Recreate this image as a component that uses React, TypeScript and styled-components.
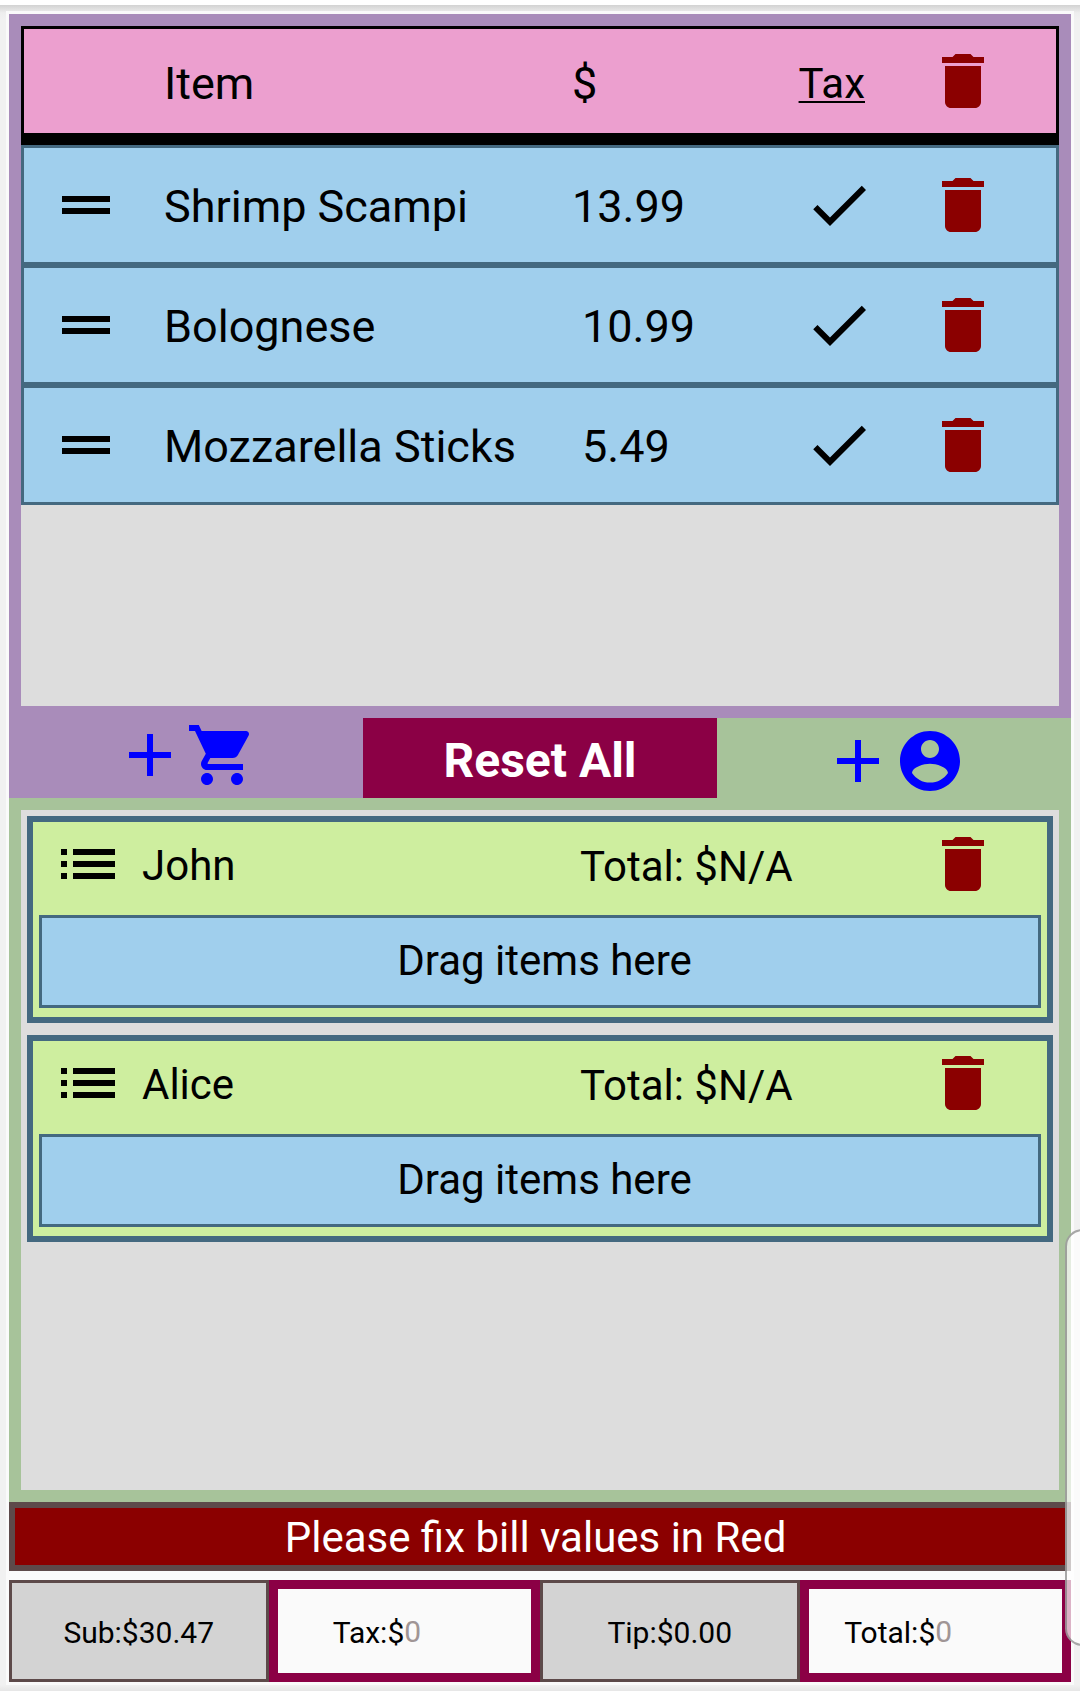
import React, { useState } from "react";
import styled, { createGlobalStyle } from "styled-components";

const color = {
  page: "#f1f1f1",
  frame: "#fafafa",
  purple: "#a98cba",
  sage: "#a7c39a",
  pink: "#ec9fcf",
  sky: "#a0cfed",
  slate: "#446980",
  lime: "#ceee9f",
  tray: "#dddddd",
  maroon: "#8b0045",
  danger: "#8b0000",
  umber: "#5d4a4a",
  link: "#0000ff",
};

const GlobalStyle = createGlobalStyle`
  *, *::before, *::after { box-sizing: border-box; }
  body {
    margin: 0;
    background: ${color.page};
    color: #000;
    font-family: Roboto, "Liberation Sans", sans-serif;
  }
  button, input { font: inherit; color: inherit; }
`;

const Screen = styled.div`
  position: relative;
  display: flex;
  flex-direction: column;
  min-height: 100vh;
  padding: 6px;
  border-top: 5px solid #fff;
  background: linear-gradient(#d2d2d2, #eeeeee 8px, ${color.page} 14px, ${color.page} calc(100% - 6px), #e6e6e6);
  overflow: hidden;
`;

const Frame = styled.main`
  flex: 1;
  display: flex;
  flex-direction: column;
  border: 3px solid ${color.frame};
  background: ${color.frame};
`;

const Panel = styled.section<{ $tone: string }>`
  flex: 1 0 0;
  display: flex;
  flex-direction: column;
  padding: 12px;
  background: ${(p) => p.$tone};
`;

const Tray = styled.div<{ $inset?: boolean }>`
  flex: 1;
  display: flex;
  flex-direction: column;
  gap: 12px;
  padding: ${(p) => (p.$inset ? "6px" : "0")};
  background: ${color.tray};
`;

const ItemTable = styled.table`
  display: block;
  font-size: 45px;
  line-height: 54px;

  thead,
  tbody {
    display: block;
  }
`;

const ItemRow = styled.tr<{ $header?: boolean }>`
  display: grid;
  grid-template-columns: 72px 450fr 231fr 72px 124px;
  align-items: center;
  min-height: ${(p) => (p.$header ? "119px" : "120px")};
  padding: 0 57px 0 26px;
  border: 3px solid ${(p) => (p.$header ? "#000" : color.slate)};
  border-bottom-width: ${(p) => (p.$header ? "12px" : "3px")};
  background: ${(p) => (p.$header ? color.pink : color.sky)};

  th,
  td {
    display: flex;
    align-items: center;
    padding: 0;
    font-weight: 400;
    white-space: nowrap;
  }

  th:nth-child(2),
  th:nth-child(3) {
    padding-top: 6px;
  }

  td:nth-child(2),
  td:nth-child(3) {
    padding-top: 4px;
  }

  th:nth-child(2),
  td:nth-child(2) {
    padding-left: 42px;
  }

  th:last-child,
  td:last-child {
    justify-content: flex-end;
  }
`;

const PriceCell = styled.td<{ $indent: boolean }>`
  && {
    padding-left: ${(p) => (p.$indent ? "10px" : "0")};
  }
`;

const TaxHeading = styled.th`
  && {
    justify-content: flex-end;
    padding: 6px 10px 0 0;
    font-size: 42px;
    text-decoration: underline 2px;
    text-underline-offset: 3px;
    text-decoration-skip-ink: none;
  }
`;

const IconButton = styled.button<{ $color?: string }>`
  display: flex;
  padding: 0;
  border: 0;
  background: none;
  color: ${(p) => p.$color ?? "#000"};
  cursor: pointer;
`;

const Glyph = styled.svg`
  display: block;
  width: 72px;
  height: 72px;
  fill: currentColor;
`;

const TaxToggle = styled.label`
  display: grid;
  cursor: pointer;

  > * {
    grid-area: 1 / 1;
  }

  input {
    width: 72px;
    height: 72px;
    margin: 0;
    appearance: none;
    cursor: pointer;
  }

  svg {
    visibility: hidden;
    pointer-events: none;
  }

  input:checked + svg {
    visibility: visible;
  }
`;

const ActionBar = styled.div`
  display: grid;
  grid-template-columns: repeat(3, 1fr);
  min-height: 80px;
`;

const AddButton = styled.button<{ $tone: string; $drop?: boolean }>`
  display: flex;
  align-items: center;
  justify-content: center;
  padding: ${(p) => (p.$drop ? "6px 0 0" : "0 0 6px")};
  border: 0;
  background: ${(p) => p.$tone};
  color: ${color.link};
  cursor: pointer;
`;

const ResetButton = styled.button`
  padding: 6px 0 0;
  border: 0;
  background: ${color.maroon};
  color: #fff;
  font-size: 48px;
  line-height: 60px;
  font-weight: 700;
  cursor: pointer;
`;

const PersonCard = styled.article`
  padding: 6px 6px 9px;
  border: 6px solid ${color.slate};
  background: ${color.lime};
  font-size: 42px;
  line-height: 54px;
`;

const PersonHeader = styled.header`
  display: grid;
  grid-template-columns: 72px 456fr 347fr 72px;
  align-items: center;
  padding: 0 42px 15px 13px;
`;

const PersonName = styled.h2`
  margin: 0;
  padding: 4px 0 0 18px;
  font-size: inherit;
  font-weight: 400;
`;

const PersonTotal = styled.span`
  padding-top: 6px;
`;

const DropZone = styled.div`
  display: flex;
  align-items: center;
  justify-content: center;
  min-height: 93px;
  padding: 0 0 2px 9px;
  border: 3px solid ${color.slate};
  background: ${color.sky};
`;

const Banner = styled.p`
  margin: 0 0 9px;
  padding: 3px 9px 0 0;
  border: 6px solid ${color.umber};
  background: ${color.danger};
  color: #fff;
  font-size: 42px;
  line-height: 54px;
  text-align: center;
`;

const BillBar = styled.footer`
  display: flex;
  min-height: 102px;
  font-size: 30px;
  line-height: 36px;
`;

const BillCell = styled.div`
  flex: 1;
  box-sizing: content-box;
  display: flex;
  align-items: center;
  justify-content: center;
  border: 3px solid ${color.umber};
  background: #d3d3d3;

  span {
    padding-top: 4px;
  }
`;

const BillField = styled.label`
  flex: 1;
  box-sizing: content-box;
  display: grid;
  grid-template-columns: 1fr 1fr;
  align-items: center;
  border: 9px solid ${color.maroon};
  background: ${color.frame};

  span {
    padding-top: 4px;
    text-align: right;
  }

  input {
    width: 100%;
    min-width: 0;
    padding: 2px 0 0;
    border: 0;
    outline: 0;
    background: none;
  }

  input::placeholder {
    color: #a09595;
    opacity: 1;
  }
`;

const EdgePanel = styled.aside`
  position: absolute;
  right: -20px;
  top: 1224px;
  width: 35px;
  height: 417px;
  border: 2px solid rgba(110, 110, 110, 0.6);
  border-radius: 20px;
  background: rgba(255, 255, 255, 0.7);
`;

const paths = {
  trash: "M6 19c0 1.1.9 2 2 2h8c1.1 0 2-.9 2-2V7H6v12zM19 4h-3.5l-1-1h-5l-1 1H5v2h14V4z",
  handle: "M20 9H4v2h16V9zM4 15h16v-2H4v2z",
  check: "M9 16.17L4.83 12l-1.42 1.41L9 19 21 7l-1.41-1.41z",
  plus: "M19 13h-6v6h-2v-6H5v-2h6V5h2v6h6v2z",
  list: "M3 13h2v-2H3v2zm0 4h2v-2H3v2zm0-8h2V7H3v2zm4 4h14v-2H7v2zm0 4h14v-2H7v2zM7 7v2h14V7H7z",
  cart: "M7 18c-1.1 0-1.99.9-1.99 2S5.9 22 7 22s2-.9 2-2-.9-2-2-2zM1 2v2h2l3.6 7.59-1.35 2.45c-.16.28-.25.61-.25.96 0 1.1.9 2 2 2h12v-2H7.42c-.14 0-.25-.11-.25-.25l.03-.12.9-1.63h7.45c.75 0 1.41-.41 1.75-1.03l3.58-6.49c.08-.14.12-.31.12-.48 0-.55-.45-1-1-1H5.21l-.94-2H1zm16 16c-1.1 0-1.99.9-1.99 2s.89 2 1.99 2 2-.9 2-2-.9-2-2-2z",
  person:
    "M12 2C6.48 2 2 6.48 2 12s4.48 10 10 10 10-4.48 10-10S17.52 2 12 2zm0 3c1.66 0 3 1.34 3 3s-1.34 3-3 3-3-1.34-3-3 1.34-3 3-3zm0 14.2c-2.5 0-4.71-1.28-6-3.22.03-1.99 4-3.08 6-3.08 1.99 0 5.97 1.09 6 3.08-1.29 1.94-3.5 3.22-6 3.22z",
};

function Icon({ name }: { name: keyof typeof paths }) {
  return (
    <Glyph viewBox="0 0 24 24" aria-hidden="true">
      <path d={paths[name]} />
    </Glyph>
  );
}

function TrashButton({ label }: { label: string }) {
  return (
    <IconButton type="button" $color={color.danger} aria-label={label}>
      <Icon name="trash" />
    </IconButton>
  );
}

const items = [
  { name: "Shrimp Scampi", price: "13.99", indent: false },
  { name: "Bolognese", price: "10.99", indent: true },
  { name: "Mozzarella Sticks", price: "5.49", indent: true },
];

const people = ["John", "Alice"];

export default function App() {
  const [taxed, setTaxed] = useState(items.map(() => true));
  const toggle = (index: number) =>
    setTaxed((all) => all.map((value, i) => (i === index ? !value : value)));

  return (
    <>
      <GlobalStyle />
      <Screen>
        <Frame>
          <Panel $tone={color.purple}>
            <Tray>
              <ItemTable>
                <thead>
                  <ItemRow $header>
                    <th />
                    <th scope="col">Item</th>
                    <th scope="col">$</th>
                    <TaxHeading scope="col">Tax</TaxHeading>
                    <th>
                      <TrashButton label="Remove all items" />
                    </th>
                  </ItemRow>
                </thead>
                <tbody>
                  {items.map((item, index) => (
                    <ItemRow key={item.name}>
                      <td>
                        <IconButton type="button" aria-label={`Move ${item.name}`}>
                          <Icon name="handle" />
                        </IconButton>
                      </td>
                      <td>{item.name}</td>
                      <PriceCell $indent={item.indent}>{item.price}</PriceCell>
                      <td>
                        <TaxToggle>
                          <input
                            type="checkbox"
                            aria-label={`Tax ${item.name}`}
                            checked={taxed[index]}
                            onChange={() => toggle(index)}
                          />
                          <Icon name="check" />
                        </TaxToggle>
                      </td>
                      <td>
                        <TrashButton label={`Remove ${item.name}`} />
                      </td>
                    </ItemRow>
                  ))}
                </tbody>
              </ItemTable>
            </Tray>
          </Panel>

          <ActionBar>
            <AddButton type="button" $tone={color.purple} aria-label="Add item">
              <Icon name="plus" />
              <Icon name="cart" />
            </AddButton>
            <ResetButton type="button">Reset All</ResetButton>
            <AddButton type="button" $tone={color.sage} $drop aria-label="Add person">
              <Icon name="plus" />
              <Icon name="person" />
            </AddButton>
          </ActionBar>

          <Panel $tone={color.sage}>
            <Tray $inset>
              {people.map((name) => (
                <PersonCard key={name}>
                  <PersonHeader>
                    <IconButton type="button" aria-label={`Items of ${name}`}>
                      <Icon name="list" />
                    </IconButton>
                    <PersonName>{name}</PersonName>
                    <PersonTotal>Total: $N/A</PersonTotal>
                    <TrashButton label={`Remove ${name}`} />
                  </PersonHeader>
                  <DropZone>Drag items here</DropZone>
                </PersonCard>
              ))}
            </Tray>
          </Panel>

          <Banner role="alert">Please fix bill values in Red</Banner>

          <BillBar>
            <BillCell>
              <span>Sub:$30.47</span>
            </BillCell>
            <BillField>
              <span>Tax:$</span>
              <input type="text" inputMode="decimal" placeholder="0" />
            </BillField>
            <BillCell>
              <span>Tip:$0.00</span>
            </BillCell>
            <BillField>
              <span>Total:$</span>
              <input type="text" inputMode="decimal" placeholder="0" />
            </BillField>
          </BillBar>
        </Frame>
        <EdgePanel aria-hidden="true" />
      </Screen>
    </>
  );
}
